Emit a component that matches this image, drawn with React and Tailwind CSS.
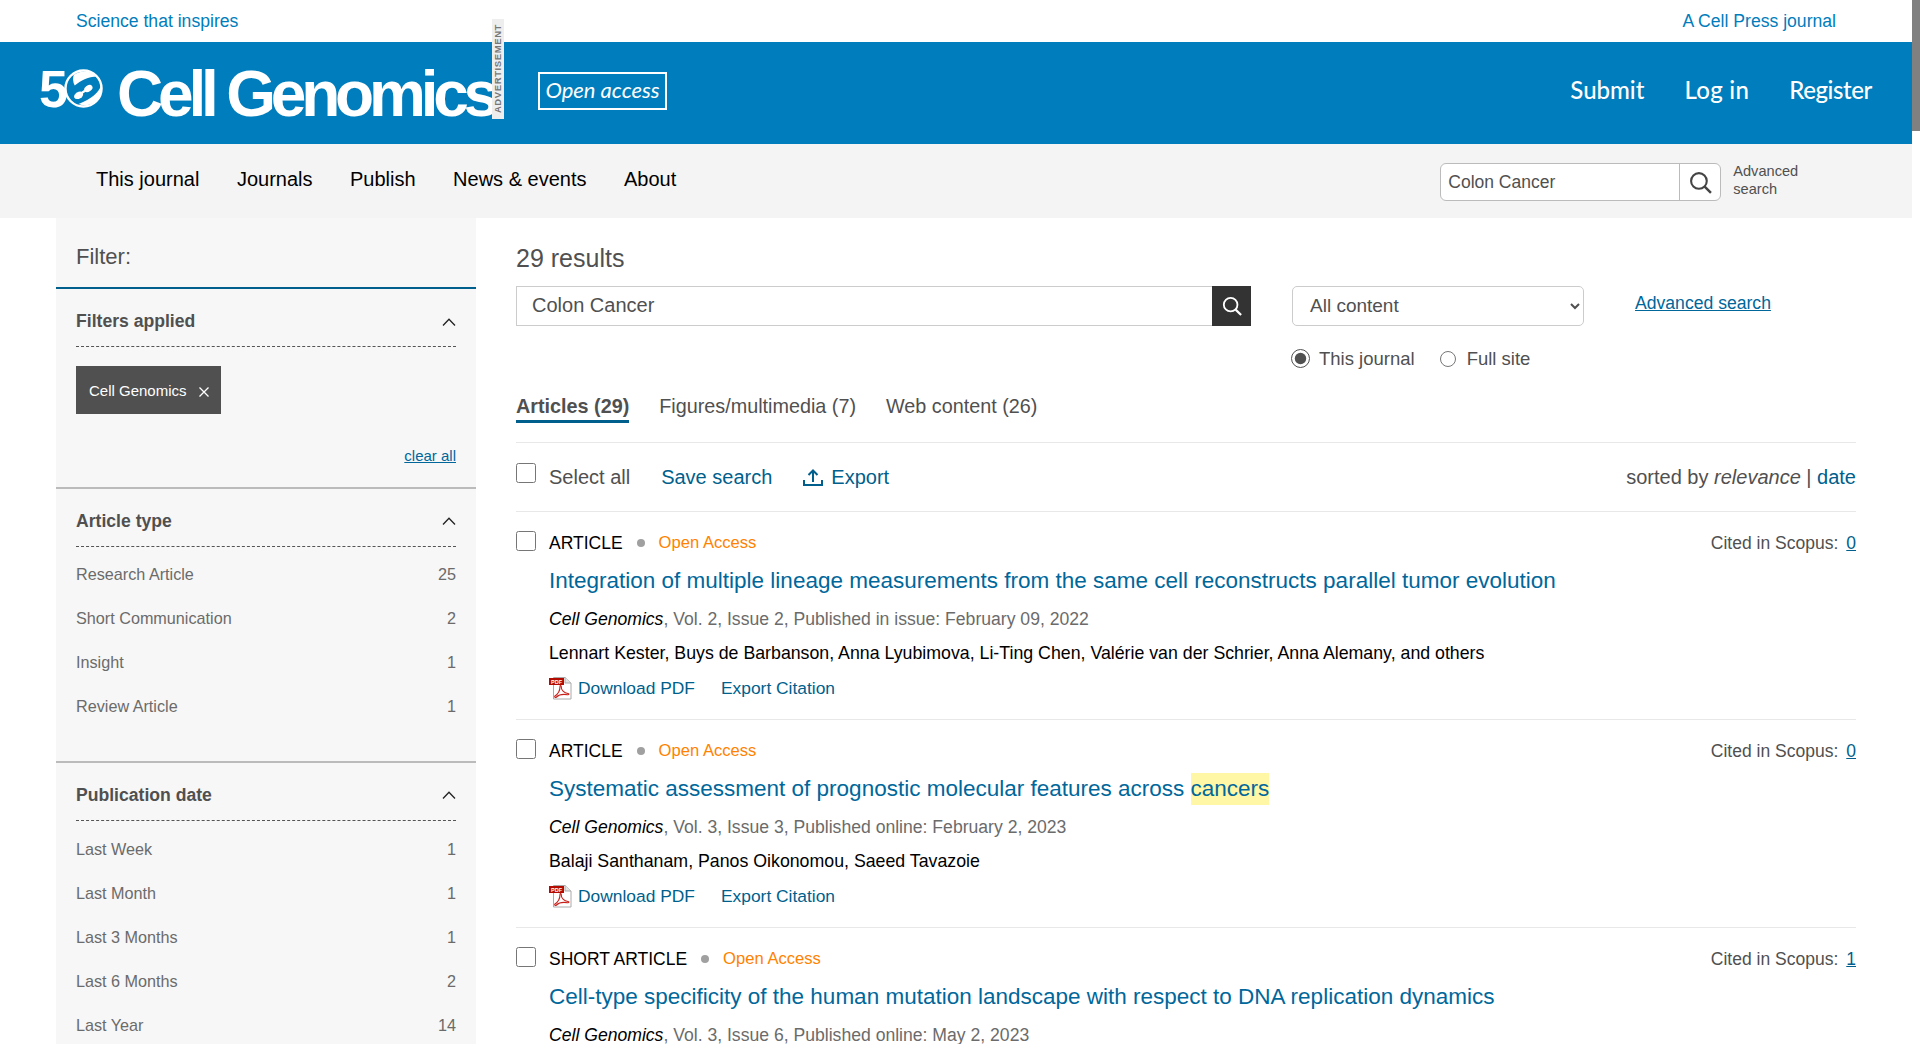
import React from 'react';

const articleTypes = [
  ['Research Article', 25],
  ['Short Communication', 2],
  ['Insight', 1],
  ['Review Article', 1],
];

const pubDates = [
  ['Last Week', 1],
  ['Last Month', 1],
  ['Last 3 Months', 1],
  ['Last 6 Months', 2],
  ['Last Year', 14],
];

const results = [
  {
    type: 'ARTICLE',
    title: 'Integration of multiple lineage measurements from the same cell reconstructs parallel tumor evolution',
    meta: ', Vol. 2, Issue 2, Published in issue: February 09, 2022',
    authors: 'Lennart Kester, Buys de Barbanson, Anna Lyubimova, Li-Ting Chen, Valérie van der Schrier, Anna Alemany, and others',
    cited: 0,
  },
  {
    type: 'ARTICLE',
    title: 'Systematic assessment of prognostic molecular features across ',
    mark: 'cancers',
    meta: ', Vol. 3, Issue 3, Published online: February 2, 2023',
    authors: 'Balaji Santhanam, Panos Oikonomou, Saeed Tavazoie',
    cited: 0,
  },
  {
    type: 'SHORT ARTICLE',
    title: 'Cell-type specificity of the human mutation landscape with respect to DNA replication dynamics',
    meta: ', Vol. 3, Issue 6, Published online: May 2, 2023',
    authors: '',
    cited: 1,
  },
];

const Chevron = () => (
  <svg width="14" height="8" viewBox="0 0 14 8" fill="none" stroke="#222" strokeWidth="1.3">
    <path d="M1 7.5 L7 1.2 L13 7.5" />
  </svg>
);

const SearchGlyph = ({ color, size }) => (
  <svg width={size} height={size} viewBox="0 0 22 22" fill="none" stroke={color} strokeWidth="2">
    <circle cx="9.5" cy="9.5" r="7.5" />
    <path d="M15 15 L21 21" strokeWidth="2.4" />
  </svg>
);

const PdfIcon = () => (
  <svg width="24" height="24" viewBox="0 0 24 24" className="shrink-0">
    <path d="M4.5 1.5 H16 L22 7 V23 H4.5 Z" fill="#fff" stroke="#aaa" strokeWidth="1" />
    <path d="M16 1.5 V7 H22" fill="#e4e4e4" stroke="#aaa" strokeWidth="1" />
    <rect x="0" y="2" width="15" height="7" fill="#b30b00" />
    <text x="2" y="7.6" fontSize="5.5" fontWeight="700" fill="#fff" fontFamily="Liberation Sans">PDF</text>
    <path d="M6 20 C9 18 11 14 11 10.5 C11 9 12.5 9 12.3 11 C12 14 15 17 19 17.5 C20.5 17.8 20 19 18.5 18.7 C14 18 10 18.5 7.5 21 C6.5 22 5 21 6 20 Z" fill="none" stroke="#c8201a" strokeWidth="1.1" />
  </svg>
);

const FiftyMark = () => (
  <svg width="39" height="39" viewBox="0 0 40 40" className="ml-[-4px] shrink-0">
    <circle cx="20" cy="20" r="18.5" fill="none" stroke="#fff" strokeWidth="2.5" />
    <path d="M10 6 C16 1 28 1 33 8 C27 7 18 11 11 17 C9 14 9 9 10 6 Z" fill="#fff" />
    <path d="M38 17 C36 24 28 31 15 36 C26 41 40 32 38 17 Z" fill="#fff" />
    <ellipse cx="15" cy="27" rx="5" ry="3.4" transform="rotate(-30 15 27)" fill="#fff" />
    <ellipse cx="25" cy="20" rx="4.6" ry="3.2" transform="rotate(-35 25 20)" fill="#fff" />
    <path d="M16 26 L25 20" stroke="#fff" strokeWidth="2.4" />
  </svg>
);

const FilterHead = ({ title }) => (
  <div className="mx-5 h-[58px] flex items-center justify-between border-b border-dashed border-[#555] pt-[8px]">
    <span className="text-[17.6px] font-bold text-[#505050]">{title}</span>
    <Chevron />
  </div>
);

const FilterRows = ({ rows, className }) => (
  <div className={className}>
    {rows.map(([label, count]) => (
      <div key={label} className="h-[44px] flex items-center justify-between text-[16.2px] text-[#6b6b6b]">
        <span>{label}</span>
        <span>{count}</span>
      </div>
    ))}
  </div>
);

const ResultItem = ({ item }) => (
  <div className="h-[208px] border-b border-[#e8e8e8] flex">
    <div className="w-[33px] shrink-0 pt-[19px]">
      <input type="checkbox" className="block w-5 h-5" />
    </div>
    <div className="flex-1 min-w-0">
      <div className="h-[24px] mt-[19px] flex items-center justify-between">
        <div className="flex items-center">
          <span className="text-[17.5px] text-black">{item.type}</span>
          <span className="w-[8px] h-[8px] rounded-full bg-[#a0a0a0] mx-[14px]"></span>
          <span className="text-[16.6px] pt-[2px] text-[#ff8200]">Open Access</span>
        </div>
        <div className="text-[17.5px] text-[#505050]">
          Cited in Scopus:
          <span className="ml-[8px] text-[#005f8c] underline">{item.cited}</span>
        </div>
      </div>
      <div className="mt-[8px] h-[36px] flex items-center text-[22.5px] leading-[32px] text-[#00679b] whitespace-nowrap">
        <span className="whitespace-pre">{item.title}</span>
        {item.mark && <span className="bg-[#fff7a6]">{item.mark}</span>}
      </div>
      <div className="mt-[4px] h-[32px] flex items-center text-[17.6px] text-[#6b6b6b] whitespace-nowrap">
        <i className="text-black">Cell Genomics</i>
        <span>{item.meta}</span>
      </div>
      <div className="mt-[1px] h-[36px] flex items-center text-[17.75px] text-black whitespace-nowrap">{item.authors}</div>
      <div className="h-[32px] flex items-center text-[17.4px] text-[#005f8c]">
        <PdfIcon />
        <span className="ml-[5px]">Download PDF</span>
        <span className="ml-[26px]">Export Citation</span>
      </div>
    </div>
  </div>
);

export default function App() {
  return (
    <div className="relative h-screen overflow-hidden bg-white font-['Liberation_Sans',Arial,sans-serif]">
      <div className="w-[1912px]">
        {/* top strip */}
        <div className="h-[42px] flex items-center justify-between pl-[76px] pr-[76px] text-[17.6px] text-[#007dbc]">
          <span>Science that inspires</span>
          <span>A Cell Press journal</span>
        </div>

        {/* blue header */}
        <header className="relative h-[102px] bg-[#007dbc] flex items-center justify-between pl-[40px] pr-[40px] text-white">
          <div className="flex items-center">
            <div className="flex items-center w-[78px] h-[46px] mt-[-9px]">
              <span className="text-[52px] font-bold leading-none ml-[-1px]">5</span>
              <FiftyMark />
            </div>
            <span className="ml-[-1px] mt-[1px] text-[64px] leading-none font-bold tracking-[-5.2px] whitespace-nowrap">Cell Genomics</span>
            <span className="ml-[44px] h-[38px] w-[129px] pb-[3px] border-2 border-white flex items-center justify-center font-['Lato',sans-serif] italic text-[22px] mt-[-4px]">Open access</span>
          </div>
          <nav className="flex items-center gap-[40px] font-['Lato',sans-serif] font-medium text-[24px] mt-[-6px]">
            <span>Submit</span>
            <span className="tracking-[0.3px]">Log in</span>
            <span className="tracking-[-0.4px]">Register</span>
          </nav>
          <div className="absolute left-[492px] top-[-23px] w-[12px] h-[100px] bg-[#eeeeee] flex items-center justify-center">
            <span className="[writing-mode:vertical-rl] rotate-180 text-[9.5px] font-bold tracking-[0.6px] text-[#777] leading-none">ADVERTISEMENT</span>
          </div>
        </header>

        {/* nav */}
        <div className="h-[74px] bg-[#f4f4f4] flex items-center pl-[96px]">
          <nav className="flex gap-[37.5px] text-[20px] text-black mt-[-4px]">
            <span>This journal</span>
            <span>Journals</span>
            <span>Publish</span>
            <span>News &amp; events</span>
            <span>About</span>
          </nav>
          <div className="ml-[764px] w-[281px] h-[38px] flex bg-white border border-[#bbb] rounded-[6px] mt-[2px]">
            <input readOnly defaultValue="Colon Cancer" className="w-[238px] h-full pl-[7px] text-[17.5px] text-[#505050] bg-transparent outline-none" />
            <div className="flex-1 border-l border-[#bbb] flex items-center justify-center">
              <SearchGlyph color="#444" size={23} />
            </div>
          </div>
          <div className="ml-[12px] text-[14.6px] leading-[18px] text-[#505050] w-[90px] mt-[-3px]">Advanced search</div>
        </div>

        <div className="flex pl-[56px]">
          {/* sidebar */}
          <aside className="w-[420px] shrink-0 bg-[#f7f7f7] h-[826px]">
            <div className="h-[71px] border-b-2 border-[#005f8c] flex items-center pl-5 pt-[7px] text-[22px] text-[#505050]">Filter:</div>
            <FilterHead title="Filters applied" />
            <div className="mx-5 mt-[19px]">
              <div className="w-[145px] h-[48px] bg-[#505050] text-white flex items-center pl-[13px] pt-[2px] text-[15px] whitespace-nowrap">
                Cell Genomics
                <svg width="10" height="10" viewBox="0 0 10 10" stroke="#fff" strokeWidth="1.3" className="ml-[12px] mt-[2px]">
                  <path d="M0.5 0.5 L9.5 9.5 M9.5 0.5 L0.5 9.5" />
                </svg>
              </div>
              <div className="mt-[31px] text-right text-[15px] text-[#00679b] underline">clear all</div>
            </div>
            <div className="mt-[19px] border-t-2 border-[#bbb]">
              <FilterHead title="Article type" />
              <FilterRows rows={articleTypes} className="mx-5 pt-[6px]" />
            </div>
            <div className="mt-[32px] border-t-2 border-[#bbb]">
              <FilterHead title="Publication date" />
              <FilterRows rows={pubDates} className="mx-5 pt-[7px]" />
            </div>
          </aside>

          {/* results */}
          <main className="ml-[40px] w-[1340px]">
            <div className="mt-[24px] text-[25px] leading-[32px] text-[#505050]">29 results</div>
            <div className="mt-[12px] flex items-start">
              <div className="w-[735px] h-[40px] flex">
                <input readOnly defaultValue="Colon Cancer" className="flex-1 min-w-0 border border-[#ccc] border-r-0 pl-[15px] pb-[2px] text-[20px] text-[#505050] outline-none" />
                <div className="w-[39px] bg-[#333] flex items-center justify-center">
                  <SearchGlyph color="#fff" size={20} />
                </div>
              </div>
              <div className="ml-[41px]">
                <select defaultValue="All content" className="w-[292px] h-[40px] border border-[#ccc] rounded-[5px] pl-[13px] pb-[2px] text-[19px] text-[#505050] bg-white">
                  <option>All content</option>
                </select>
                <div className="mt-[19px] flex items-center text-[18.5px] text-[#505050]">
                  <input type="radio" name="scope" defaultChecked className="w-[19px] h-[19px] ml-[-1px] accent-[#505050]" />
                  <span className="ml-[9px]">This journal</span>
                  <input type="radio" name="scope" className="ml-[25px] w-[16px] h-[16px]" />
                  <span className="ml-[11px]">Full site</span>
                </div>
              </div>
              <span className="ml-[51px] mt-[4px] text-[17.6px] text-[#00679b] underline">Advanced search</span>
            </div>

            <div className="mt-[-12px] h-[82px] flex items-start border-b border-[#e8e8e8] text-[19.8px] text-[#505050]">
              <div className="mt-[31px] flex gap-[30px]">
                <span className="font-bold h-[31px] border-b-[3px] border-[#005f8c]">Articles (29)</span>
                <span>Figures/multimedia (7)</span>
                <span>Web content (26)</span>
              </div>
            </div>

            <div className="h-[69px] flex items-center border-b border-[#e8e8e8] text-[20px]">
              <input type="checkbox" className="w-5 h-5 mt-[-7px]" />
              <span className="ml-[13px] text-[#505050]">Select all</span>
              <span className="ml-[31px] text-[#005f8c]">Save search</span>
              <svg width="20" height="20" viewBox="0 0 20 20" fill="none" stroke="#005f8c" strokeWidth="2" className="ml-[31px]">
                <path d="M10 15 V4 M5.5 8 L10 3.5 L14.5 8 M1 13 V18 H19 V13" />
              </svg>
              <span className="ml-[8px] text-[#005f8c]">Export</span>
              <span className="ml-auto text-[#505050]">
                sorted by <i>relevance</i> | <span className="text-[#005f8c]">date</span>
              </span>
            </div>

            {results.map((item) => (
              <ResultItem key={item.title} item={item} />
            ))}
          </main>
        </div>
      </div>

      {/* scrollbar */}
      <div className="absolute right-0 top-0 w-[8px] h-[131px] bg-[#808080]"></div>
    </div>
  );
}
